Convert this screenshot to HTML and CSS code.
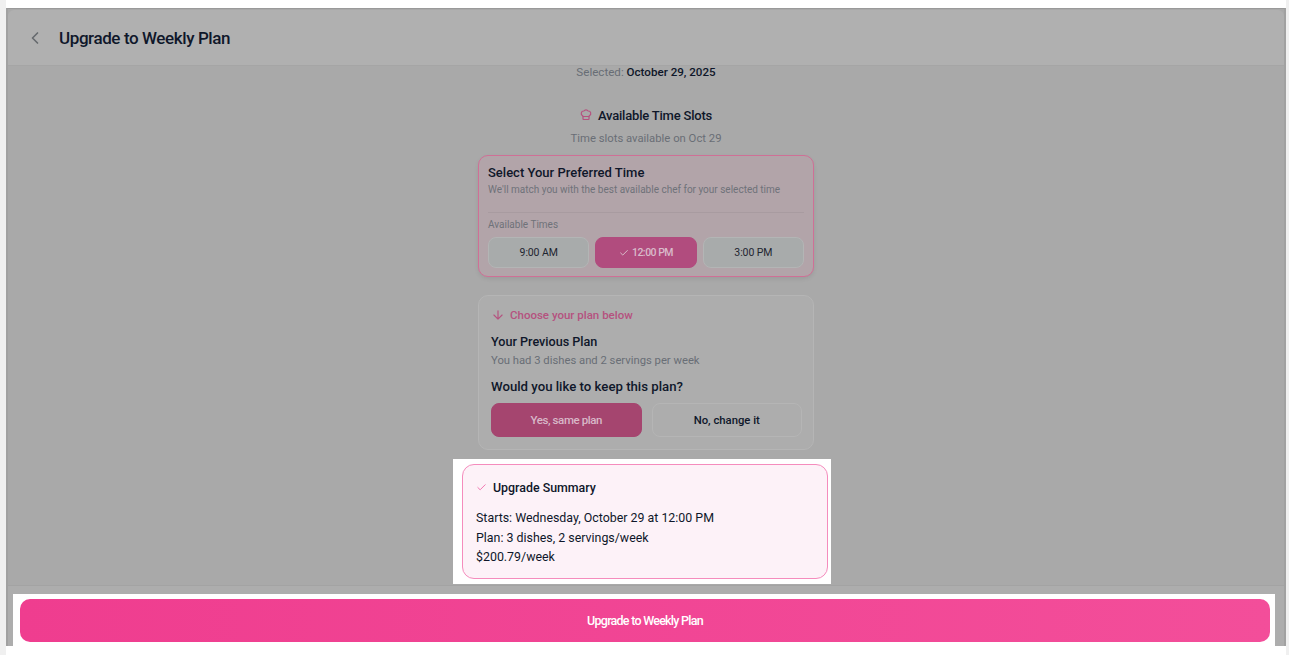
FILE: index.html
```html
<!DOCTYPE html>
<html lang="en">
<head>
    <meta charset="utf-8">
    <title>Upgrade to Weekly Plan</title>
    <link rel="stylesheet" href="styles.css">
</head>
<body>
    <div class="page">
        <div class="overlay">
            <header class="top-bar">
                <svg class="back-icon" width="20" height="20" viewBox="0 0 24 24" fill="none" stroke="#666a6e" stroke-width="2" stroke-linecap="round" stroke-linejoin="round"><path d="M15 18l-6-6 6-6"/></svg>
                <h1>Upgrade to Weekly Plan</h1>
            </header>

            <main class="content">
                <p class="selected">Selected: <strong>October 29, 2025</strong></p>

                <h2 class="slots-title">
                    <svg width="12" height="12" viewBox="0 0 24 24" fill="none" stroke="#b5527f" stroke-width="2.4" stroke-linecap="round" stroke-linejoin="round"><path d="M17 21a1 1 0 0 0 1-1v-5.35c0-.46.31-.85.7-1.1a5 5 0 0 0-2.4-9.5 5 5 0 0 0-8.6 0 5 5 0 0 0-2.4 9.5c.39.25.7.64.7 1.1V20a1 1 0 0 0 1 1z"/><path d="M6 15h12"/></svg>
                    Available Time Slots
                </h2>
                <p class="slots-sub">Time slots available on Oct 29</p>

                <section class="time-card">
                    <h3>Select Your Preferred Time</h3>
                    <p class="time-hint">We'll match you with the best available chef for your selected time</p>
                    <div class="time-label">Available Times</div>
                    <div class="time-row">
                        <button class="time-btn">9:00 AM</button>
                        <button class="time-btn active">
                            <svg width="10" height="10" viewBox="0 0 24 24" fill="none" stroke="#d9bccb" stroke-width="2.4" stroke-linecap="round" stroke-linejoin="round"><path d="M20 6L9 17l-5-5"/></svg>
                            12:00 PM
                        </button>
                        <button class="time-btn">3:00 PM</button>
                    </div>
                </section>

                <section class="plan-card">
                    <div class="plan-hint">
                        <svg width="14" height="14" viewBox="0 0 24 24" fill="none" stroke="#b5527f" stroke-width="2" stroke-linecap="round" stroke-linejoin="round"><path d="M12 5v14M19 12l-7 7-7-7"/></svg>
                        Choose your plan below
                    </div>
                    <h3>Your Previous Plan</h3>
                    <p class="plan-text">You had 3 dishes and 2 servings per week</p>
                    <h4>Would you like to keep this plan?</h4>
                    <div class="plan-row">
                        <button class="plan-btn yes">Yes, same plan</button>
                        <button class="plan-btn">No, change it</button>
                    </div>
                </section>

                <div class="summary-wrap">
                    <section class="summary-card">
                        <div class="summary-title">
                            <svg width="11" height="11" viewBox="0 0 24 24" fill="none" stroke="#f06aa8" stroke-width="2" stroke-linecap="round" stroke-linejoin="round"><path d="M20 6L9 17l-5-5"/></svg>
                            Upgrade Summary
                        </div>
                        <p>Starts: Wednesday, October 29 at 12:00 PM</p>
                        <p>Plan: 3 dishes, 2 servings/week</p>
                        <p>$200.79/week</p>
                    </section>
                </div>
            </main>

            <footer class="bottom-bar">
                <div class="cta-wrap">
                    <button class="cta">Upgrade to Weekly Plan</button>
                </div>
            </footer>
        </div>
    </div>
</body>
</html>
```

FILE: styles.css
```css
* {
    box-sizing: border-box;
}

body {
    margin: 0;
    height: 100vh;
    overflow: hidden;
    background-color: #f0f0f0;
    font-family: "Roboto", "Liberation Sans", sans-serif;
    color: #0f172a;
}

h1, h2, h3, h4, p {
    margin: 0;
}

button {
    font-family: inherit;
    cursor: pointer;
}

.page {
    height: 655px;
    margin: 0 3px 0 6px;
    padding: 8px 0 9px;
    background-color: #fff;
}

.overlay {
    display: flex;
    flex-direction: column;
    height: 638px;
    background-color: #a9a9a9;
    border-top: 1px solid #999;
    border-left: 2px solid #a1a1a1;
    border-right: 2px solid #a1a1a1;
}

.top-bar {
    display: flex;
    align-items: center;
    height: 56px;
    margin-top: 1px;
    padding-left: 17px;
    background-color: #b0b0b0;
    border-bottom: 1px solid #a5a5a5;
    border-radius: 6px 6px 0 0;
}

.back-icon {
    margin-right: 14px;
}

.top-bar h1 {
    font-size: 17px;
    font-weight: 500;
    letter-spacing: -0.4px;
}

.content {
    flex: 1;
    display: flex;
    flex-direction: column;
    align-items: center;
}

.selected {
    height: 13px;
    font-size: 11.6px;
    line-height: 13px;
    color: #686d75;
}

.selected strong {
    font-weight: 500;
    color: #0f172a;
}

.slots-title {
    display: flex;
    align-items: center;
    gap: 6px;
    margin-top: 28px;
    height: 16px;
    font-size: 13px;
    font-weight: 500;
    letter-spacing: -0.2px;
}

.slots-sub {
    margin-top: 9px;
    height: 14px;
    font-size: 11.3px;
    line-height: 14px;
    color: #696e76;
}

.time-card {
    width: 336px;
    height: 122px;
    margin-top: 9px;
    padding: 9px 9px 8px;
    background-color: #b2a4a9;
    border: 1px solid #cf7096;
    border-radius: 10px;
    box-shadow: 0 2px 4px rgba(0, 0, 0, 0.08);
}

.time-card h3 {
    height: 16px;
    font-size: 13px;
    font-weight: 500;
    line-height: 16px;
}

.time-hint {
    height: 11px;
    margin-top: 3px;
    font-size: 10px;
    line-height: 11px;
    color: #6f7279;
}

.time-label {
    height: 25px;
    margin-top: 17px;
    padding-top: 6px;
    border-top: 1px solid #a89ba0;
    font-size: 10px;
    line-height: 12px;
    color: #6f7279;
}

.time-row {
    display: flex;
    gap: 6px;
}

.time-btn {
    display: flex;
    align-items: center;
    justify-content: center;
    gap: 3px;
    flex: 1;
    height: 31px;
    padding: 0;
    background-color: #a8abab;
    border: 1px solid #b3b5b5;
    border-radius: 8px;
    font-size: 10.5px;
    letter-spacing: -0.1px;
    color: #1e2530;
}

.time-btn.active {
    background-color: #b14c7e;
    border-color: #b14c7e;
    color: #d9bccb;
    font-weight: 500;
    letter-spacing: -0.5px;
}

.plan-card {
    width: 336px;
    height: 155px;
    margin-top: 18px;
    padding: 11px 11px 0 12px;
    background-color: #adadad;
    border: 1px solid #b5b5b5;
    border-radius: 10px;
}

.plan-hint {
    display: flex;
    align-items: center;
    gap: 5px;
    height: 16px;
    font-size: 11.5px;
    font-weight: 500;
    color: #b5527f;
}

.plan-card h3 {
    height: 16px;
    margin-top: 11px;
    font-size: 12.6px;
    font-weight: 500;
    line-height: 16px;
}

.plan-text {
    height: 14px;
    margin-top: 4px;
    font-size: 11.25px;
    line-height: 14px;
    color: #696e76;
}

.plan-card h4 {
    height: 16px;
    margin-top: 11px;
    font-size: 13.2px;
    font-weight: 500;
    line-height: 16px;
}

.plan-row {
    display: flex;
    gap: 10px;
    margin-top: 8px;
}

.plan-btn {
    flex: 1;
    height: 34px;
    padding: 0;
    background-color: transparent;
    border: 1px solid #b5b5b5;
    border-radius: 8px;
    font-size: 11.3px;
    font-weight: 500;
    color: #0f172a;
}

.plan-btn.yes {
    background-color: #a5456f;
    border-color: #a5456f;
    color: #d8b8c8;
    font-size: 11.5px;
    letter-spacing: -0.4px;
}

.summary-wrap {
    width: 378px;
    height: 125px;
    margin: 9px 8px 0 0;
    padding: 5px 3px 5px 9px;
    background-color: #fff;
}

.summary-card {
    height: 115px;
    padding: 13px 13px 0;
    background-color: #fdf2f8;
    border: 1px solid #f58cbd;
    border-radius: 12px;
    font-size: 12.4px;
}

.summary-title {
    display: flex;
    align-items: center;
    gap: 6px;
    height: 18px;
    margin-bottom: 12px;
    font-weight: 500;
}

.summary-card p {
    height: 19.5px;
    line-height: 19.5px;
}

.bottom-bar {
    height: 61px;
    padding: 8px 9px 0 5px;
    background-color: #adadad;
    border-top: 1px solid #a3a3a3;
}

.cta-wrap {
    height: 52px;
    padding: 5px 5px 4px 7px;
    background-color: #fff;
}

.cta {
    display: block;
    width: 100%;
    height: 43px;
    background: linear-gradient(90deg, #ef3d8f, #f34e9a);
    border: none;
    border-radius: 10px;
    font-size: 12.5px;
    font-weight: 500;
    letter-spacing: -0.75px;
    color: #fff;
}
```
